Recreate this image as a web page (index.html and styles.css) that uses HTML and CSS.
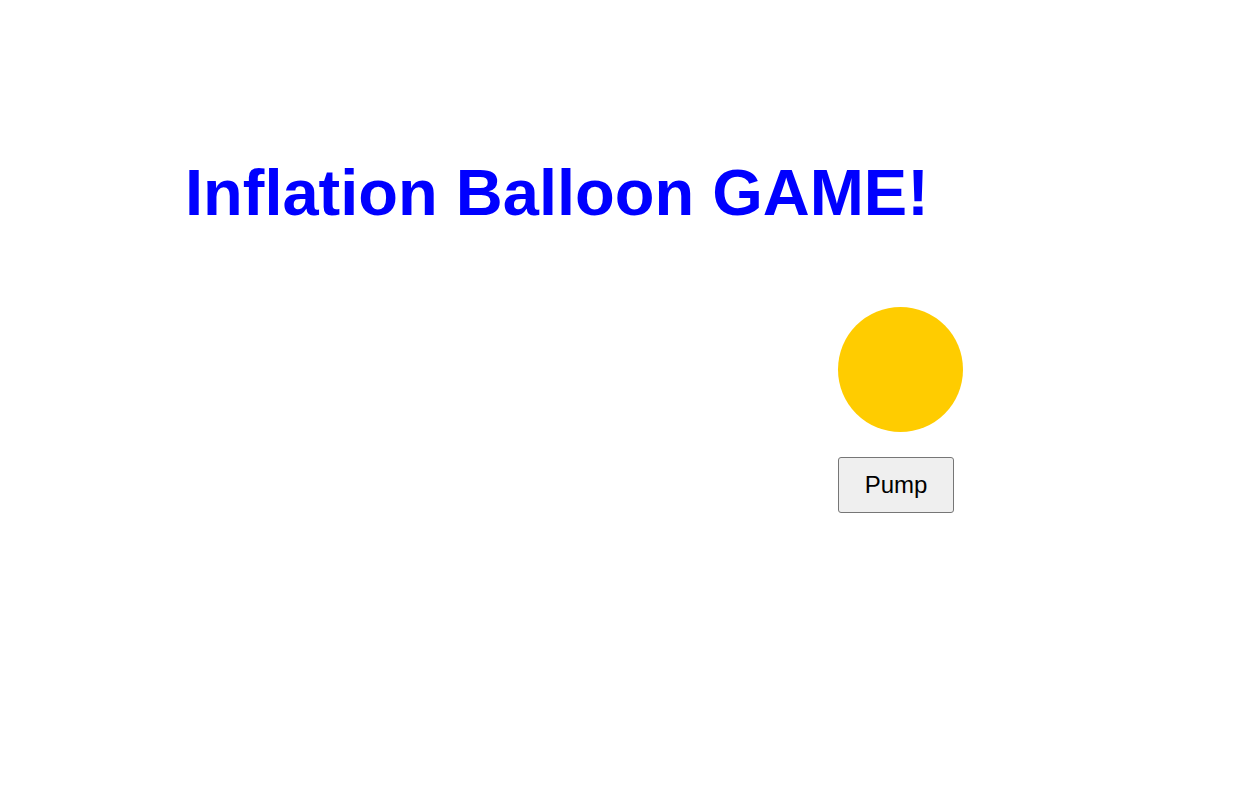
FILE: index.html
```html
<!DOCTYPE html>
<html lang="en">
<head>
  <meta charset="UTF-8" />
  <meta name="viewport" content="width=device-width, initial-scale=1.0" />
  <title>Inflation Balloon GAME!</title>
  <link rel="stylesheet" href="styles.css">
</head>
<body>

<h1 class="title">Inflation Balloon GAME!</h1>

<!-- Balon + pompa -->
<div class="stage">
  <div id="balloon" class="balloon"></div>
  <button id="pump" class="pump">Pump</button>
</div>

</body>
</html>
```

FILE: styles.css
```css
* { margin: 0; padding: 0; box-sizing: border-box; }
body {
  background: #fff;
  font-family: 'Liberation Sans', Arial, sans-serif;
  color: #000;
}
.title {
  padding: 156px 0 0 185px;
  font-size: 65px;
  line-height: 1.15;
  font-weight: bold;
  color: #0000ff;
}
.stage {
  display: flex;
  flex-direction: column;
  align-items: flex-start;
  gap: 25px;
  padding: 76px 0 0 838px;
}
.balloon {
  width: 125px;
  height: 125px;
  border-radius: 50%;
  background: #ffcc00;
}
.pump {
  width: 116px;
  font-family: 'Liberation Sans', Arial, sans-serif;
  font-size: 24px;
  padding: 13px 0;
  background: #efefef;
  border: 1px solid #767676;
  border-radius: 3px;
  color: #000;
}
```
